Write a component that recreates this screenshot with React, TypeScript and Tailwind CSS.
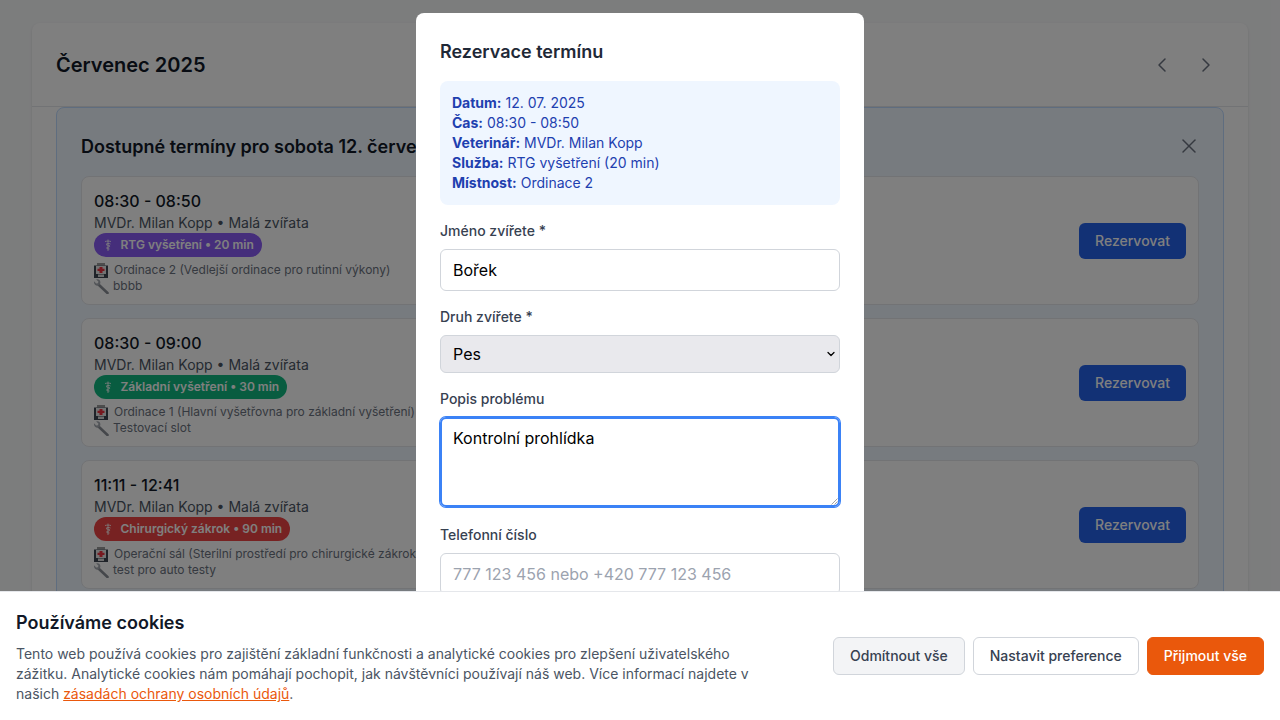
import React from "react";
import { ChevronDown, ChevronLeft, ChevronRight, X } from "lucide-react";

const slots = [
  { time: "08:30 - 08:50", badge: "RTG vyšetření • 20 min", color: "bg-[#8b5cf6]", room: "Ordinace 2 (Vedlejší ordinace pro rutinní výkony)", note: "bbbb" },
  { time: "08:30 - 09:00", badge: "Základní vyšetření • 30 min", color: "bg-[#10b981]", room: "Ordinace 1 (Hlavní vyšetřovna pro základní vyšetření)", note: "Testovací slot" },
  { time: "11:11 - 12:41", badge: "Chirurgický zákrok • 90 min", color: "bg-[#ef4444]", room: "Operační sál (Sterilní prostředí pro chirurgické zákroky)", note: "test pro auto testy" },
];

function Staff() {
  return (
    <svg width="12" height="14" viewBox="0 0 12 14" fill="none" stroke="#ffffff" strokeOpacity="0.8" strokeWidth="1" className="mr-[6.5px] shrink-0">
      <path d="M6 1.5V13" />
      <path d="M3 3.5C4.5 3 7.5 3 9 3.5" />
      <path d="M8.5 6C7 5 4.5 5.5 4 6.5C5 7.5 7.5 7 8 8C8 9 5 9 4.5 10C5 10.8 6.5 11 7.5 11" />
    </svg>
  );
}

function Hospital() {
  return (
    <svg width="14" height="15" viewBox="0 0 14 15" className="mr-[6px] shrink-0">
      <rect x="3" y="0" width="8" height="2.5" fill="#9a9a9a" />
      <rect x="0" y="2.5" width="14" height="12.5" fill="#3f4652" />
      <rect x="2" y="3" width="10" height="8" fill="#e6e6e6" />
      <path d="M5.5 4H8.5V5.7H10.5V8H8.5V10H5.5V8H3.5V5.7H5.5Z" fill="#ef3340" />
      <rect x="4" y="11.5" width="6" height="2.5" fill="#d8d8d8" />
    </svg>
  );
}

function Wrench() {
  return (
    <svg width="16" height="15" viewBox="0 0 16 15" fill="none" className="mr-[4px] -ml-px shrink-0">
      <path d="M14.5 14L6 6" stroke="#8a8f96" strokeWidth="2.6" strokeLinecap="round" />
      <path d="M1 2.2L3.2 4.6L5 4.2L5.4 2.4L3.2 0.6C5.2 -0.2 7.4 1.2 7.4 3.4C7.4 4.2 7 5 6.6 5.6L5.4 6.6C3.2 7.6 0.4 5 1 2.2Z" fill="#a6abb2" />
    </svg>
  );
}

function Slot({ s }: { s: (typeof slots)[number] }) {
  return (
    <div className="flex items-center justify-between rounded-lg border border-[#e5e7eb] bg-white px-3 pb-[10px] pt-3">
      <div className="flex flex-col items-start">
        <div className="text-base font-medium leading-6 text-[#111827]">{s.time}</div>
        <div className="text-sm leading-5 text-[#4b5563]">MVDr. Milan Kopp • Malá zvířata</div>
        <div className={`flex h-6 items-center rounded-full px-2 text-xs font-semibold text-white ${s.color}`}>
          <Staff />
          <span>{s.badge}</span>
        </div>
        <div className="mt-[5px] flex items-center text-xs leading-4 text-[#6b7280]"><Hospital />{s.room}</div>
        <div className="flex items-center text-xs leading-4 text-[#6b7280]"><Wrench />{s.note}</div>
      </div>
      <button className="mb-[2px] rounded-md bg-[#2563eb] px-4 py-2 text-sm font-medium text-white">Rezervovat</button>
    </div>
  );
}

function Field({ label, children }: { label: string; children: React.ReactNode }) {
  return (
    <div className="mb-4">
      <label className="mb-2 block text-sm font-medium leading-5 text-[#374151]">{label}</label>
      {children}
    </div>
  );
}

export default function App() {
  return (
    <div className="relative h-[720px] w-[1280px] overflow-hidden bg-[#f9fafb] font-[Inter,sans-serif]">
      <div className="mx-8 -mt-[2px] mb-[25px] h-[0px] bg-white shadow-lg" />
      <div className="mx-8 rounded-lg bg-white shadow-sm">
        <div className="flex h-[84px] items-center justify-between border-b border-[#e5e7eb] pl-6 pr-6">
          <h2 className="text-xl font-semibold text-[#111827]">Červenec 2025</h2>
          <div className="flex gap-2 text-[#6b7280]">
            <button className="p-[6px]"><ChevronLeft size={24} strokeWidth={1.5} /></button>
            <button className="p-[6px]"><ChevronRight size={24} strokeWidth={1.5} /></button>
          </div>
        </div>
        <div className="mx-6 rounded-lg border border-[#bfdbfe] bg-[#eff6ff] p-6">
          <div className="mb-4 flex h-7 items-start justify-between">
            <h3 className="w-[1000px] whitespace-nowrap text-lg font-semibold leading-[30px] text-[#111827]">Dostupné termíny pro sobota 12. července 2025</h3>
            <X size={24} strokeWidth={1.5} className="-mr-[2px] mt-[2px] text-[#6b7280]" />
          </div>
          <div className="flex flex-col gap-[13px]">
            {slots.map((s) => <Slot key={s.time} s={s} />)}
          </div>
        </div>
      </div>

      <div className="absolute inset-0 bg-black/50" />

      <div className="absolute left-[416px] top-[13px] w-[448px] rounded-lg bg-white p-6">
        <h3 className="mb-4 h-7 text-lg font-semibold leading-[30px] text-[#1f2937]">Rezervace termínu</h3>
        <div className="mb-4 rounded-lg bg-[#eff6ff] p-3 text-sm leading-5 text-[#1e40af]">
          <div><strong className="font-bold">Datum:</strong> 12. 07. 2025</div>
          <div><strong className="font-bold">Čas:</strong> 08:30 - 08:50</div>
          <div><strong className="font-bold">Veterinář:</strong> MVDr. Milan Kopp</div>
          <div><strong className="font-bold">Služba:</strong> RTG vyšetření (20 min)</div>
          <div><strong className="font-bold">Místnost:</strong> Ordinace 2</div>
        </div>
        <Field label="Jméno zvířete *">
          <input readOnly value="Bořek" className="block w-full rounded-md border border-[#d1d5db] px-3 py-2 text-base text-black outline-none" />
        </Field>
        <Field label="Druh zvířete *">
          <div className="relative">
            <select defaultValue="Pes" className="block h-[38px] w-full appearance-none rounded-md border border-[#d1d5db] bg-[#e9e9ed] px-3 text-base text-black outline-none">
              <option>Pes</option>
              <option>Kočka</option>
            </select>
            <ChevronDown size={12} strokeWidth={2.5} className="pointer-events-none absolute right-[3px] top-[13px] text-black" />
          </div>
        </Field>
        <Field label="Popis problému">
          <div className="relative pb-[2px]">
            <textarea readOnly rows={3} value="Kontrolní prohlídka" className="block w-full resize-none rounded-md border-2 border-[#3b82f6] px-[11px] py-[7px] text-base text-black outline-none ring-1 ring-[#3b82f6]" />
            <svg width="7" height="7" viewBox="0 0 7 7" className="pointer-events-none absolute bottom-[4px] right-[2px]" stroke="#a3a3a3" strokeWidth="1">
              <path d="M0.5 6.5L6.5 0.5M3.5 6.5L6.5 3.5" />
            </svg>
          </div>
        </Field>
        <Field label="Telefonní číslo">
          <input readOnly placeholder="777 123 456 nebo +420 777 123 456" className="block w-full rounded-md border border-[#d1d5db] px-3 py-2 text-base text-black outline-none placeholder:text-[#9ca3af]" />
        </Field>
      </div>

      <div className="fixed inset-x-0 bottom-0 flex h-[129px] items-center justify-between border-t border-[#e5e7eb] bg-white px-4">
        <div className="w-[740px]">
          <h3 className="mb-2 h-7 text-lg font-semibold leading-[30px] text-[#111827]">Používáme cookies</h3>
          <p className="text-sm leading-5 text-[#4b5563]">
            Tento web používá cookies pro zajištění základní funkčnosti a analytické cookies pro zlepšení uživatelského zážitku. Analytické cookies nám pomáhají pochopit, jak návštěvníci používají náš web. Více informací najdete v našich{" "}
            <a className="text-[#ea580c] underline">zásadách ochrany osobních údajů</a>.
          </p>
        </div>
        <div className="flex gap-2">
          <button className="rounded-md border border-[#d1d5db] bg-[#f3f4f6] px-4 py-2 text-sm font-medium text-[#374151]">Odmítnout vše</button>
          <button className="rounded-md border border-[#d1d5db] bg-white px-4 py-2 text-sm font-medium text-[#374151]">Nastavit preference</button>
          <button className="rounded-md border border-[#ea580c] bg-[#ea580c] px-4 py-2 text-sm font-medium text-white">Přijmout vše</button>
        </div>
      </div>
    </div>
  );
}
